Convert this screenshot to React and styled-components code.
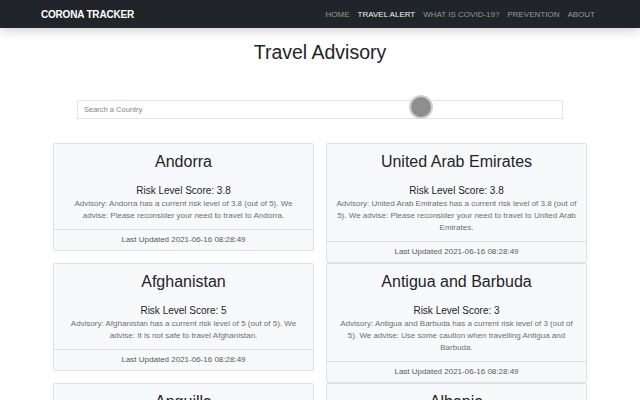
import React from "react"
import styled, { createGlobalStyle } from "styled-components"

const advisories = [
  {
    country: "Andorra",
    score: "3.8",
    text: "Advisory: Andorra has a current risk level of 3.8 (out of 5). We advise: Please reconsider your need to travel to Andorra.",
  },
  {
    country: "United Arab Emirates",
    score: "3.8",
    text: "Advisory: United Arab Emirates has a current risk level of 3.8 (out of 5). We advise: Please reconsider your need to travel to United Arab Emirates.",
  },
  {
    country: "Afghanistan",
    score: "5",
    text: "Advisory: Afghanistan has a current risk level of 5 (out of 5). We advise: It is not safe to travel Afghanistan.",
  },
  {
    country: "Antigua and Barbuda",
    score: "3",
    text: "Advisory: Antigua and Barbuda has a current risk level of 3 (out of 5). We advise: Use some caution when travelling Antigua and Barbuda.",
  },
  {
    country: "Anguilla",
    score: "3",
    text: "Advisory: Anguilla has a current risk level of 3 (out of 5). We advise: Use some caution when travelling Anguilla.",
  },
  {
    country: "Albania",
    score: "3",
    text: "Advisory: Albania has a current risk level of 3 (out of 5). We advise: Use some caution when travelling Albania.",
  },
]

const links = ["HOME", "TRAVEL ALERT", "WHAT IS COVID-19?", "PREVENTION", "ABOUT"]

const App = () => {
  return (
    <Page>
      <GlobalStyle />
      <Navbar>
        <Brand>CORONA TRACKER</Brand>
        <NavList>
          {links.map(l => (
            <NavLink key={l} active={l === "TRAVEL ALERT"}>{l}</NavLink>
          ))}
        </NavList>
      </Navbar>
      <Title>Travel Advisory</Title>
      <SearchWrap>
        <Search placeholder="Search a Country" />
        <Cursor />
      </SearchWrap>
      <Grid>
        {advisories.map(a => (
          <Card key={a.country}>
            <CardBody>
              <Country>{a.country}</Country>
              <Score>Risk Level Score: {a.score}</Score>
              <Advice>{a.text}</Advice>
            </CardBody>
            <Footer>Last Updated 2021-06-16 08:28:49</Footer>
          </Card>
        ))}
      </Grid>
    </Page>
  )
}

export default App

const GlobalStyle = createGlobalStyle`
  body {
    margin: 0;
    background: #fff;
    font-family: "Liberation Sans", Arial, sans-serif;
    color: #212529;
  }
`

const Page = styled.div`
  width: 640px;
  height: 400px;
  overflow: hidden;
`

const Navbar = styled.nav`
  height: 28px;
  background: #212529;
  display: flex;
  align-items: center;
  justify-content: space-between;
  padding: 0 41px;
  box-shadow: 0 3px 12px rgba(0, 0, 0, 0.18);
  position: relative;
  z-index: 1;
`

const Brand = styled.div`
  color: #fff;
  font-weight: bold;
  font-size: 10px;
  letter-spacing: -0.2px;
`

const NavList = styled.div`
  display: flex;
`

const NavLink = styled.a`
  font-size: 8px;
  padding: 0 4px;
  color: ${p => (p.active ? "#f2f2f2" : "#95979a")};
`

const Title = styled.h1`
  margin: 12px 0 0;
  font-size: 19.5px;
  line-height: 24px;
  font-weight: normal;
  text-align: center;
`

const SearchWrap = styled.div`
  position: relative;
  width: 486px;
  margin: 36px auto 24px;
`

const Search = styled.input`
  display: block;
  box-sizing: border-box;
  width: 100%;
  height: 19px;
  border: 1px solid #e2e4e7;
  padding: 0 6px;
  font-family: "Liberation Sans", Arial, sans-serif;
  font-size: 7.5px;
  outline: none;
  &::placeholder {
    color: #80868c;
  }
`

const Cursor = styled.div`
  position: absolute;
  left: 332px;
  top: -5px;
  width: 20px;
  height: 20px;
  border-radius: 50%;
  background: #8e8e8e;
  border: 2px solid #cfcfcf;
`

const Grid = styled.div`
  width: 534px;
  margin: 0 auto;
  display: grid;
  grid-template-columns: 1fr 1fr;
  column-gap: 12px;
  row-gap: 0;
  align-items: start;
`

const Card = styled.div`
  background: #f8f9fa;
  border: 1px solid #e0e1e2;
  border-radius: 2px;
  text-align: center;
`

const CardBody = styled.div`
  padding: 8px 8px 7px;
`

const Country = styled.h2`
  margin: 0 0 12px;
  font-size: 16px;
  line-height: 19px;
  font-weight: normal;
`

const Score = styled.p`
  margin: 0;
  font-size: 10px;
  line-height: 15px;
`

const Advice = styled.p`
  margin: 0;
  font-size: 8px;
  line-height: 12px;
  color: #6c6f73;
`

const Footer = styled.div`
  border-top: 1px solid #d5e3dc;
  padding: 4px 10px;
  font-size: 8px;
  line-height: 12px;
  color: #55595d;
`
